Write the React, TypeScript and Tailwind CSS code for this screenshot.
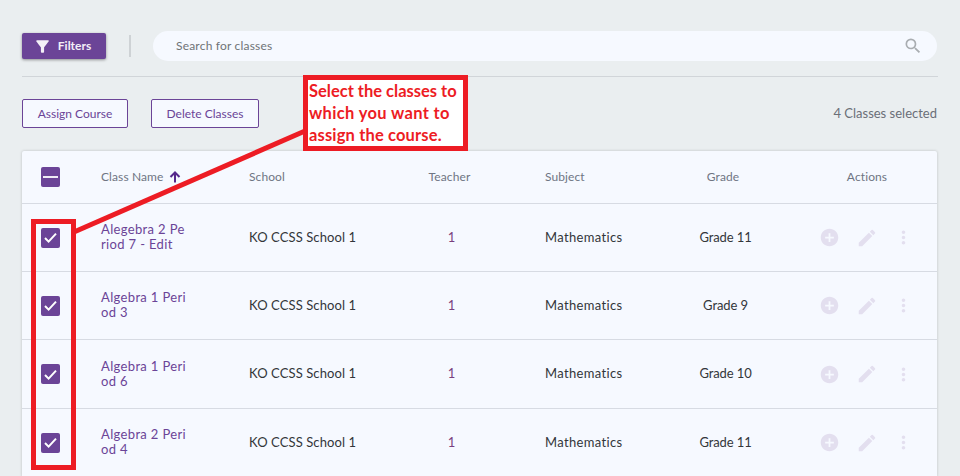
import { MdAddCircle, MdEdit, MdMoreVert, MdSearch, MdFilterAlt } from "react-icons/md";

const font = { fontFamily: '"Lato", "Noto Sans", sans-serif' };

const rows = [
  { a: "Alegebra 2 Pe", b: "riod 7 - Edit", grade: "Grade 11", h: "h-[68px]" },
  { a: "Algebra 1 Peri", b: "od 3", grade: "Grade 9", h: "h-[68px]" },
  { a: "Algebra 1 Peri", b: "od 6", grade: "Grade 10", h: "h-[69px]" },
  { a: "Algebra 2 Peri", b: "od 4", grade: "Grade 11", h: "h-[68px]" },
];

function Box({ minus }: { minus?: boolean }) {
  return (
    <div className="w-[19px] h-[20px] rounded-[2px] bg-[#6b4497] flex items-center justify-center">
      {minus ? (
        <div className="w-[15px] h-[2px] bg-[#f0ecf5]" />
      ) : (
        <svg width="15" height="13" viewBox="0 0 15 13" fill="none">
          <path d="M2 7l3.6 3.6L13 2.6" stroke="#fff" strokeWidth="2" />
        </svg>
      )}
    </div>
  );
}

export default function App() {
  return (
    <div className="relative h-[476px] w-[960px] overflow-hidden bg-[#eaeef0]" style={font}>
      <div className="pl-[22px] pr-[22px]">
        <div className="flex items-center h-[77px] pt-[16px] border-b border-[#d1d5d9]">
          <button className="w-[84px] h-[26px] rounded-[2px] bg-[#6b4497] text-[#f3f0f7] text-[12px] font-bold flex items-center justify-center gap-[6px] shadow-[0_1px_3px_rgba(0,0,0,0.4)]">
            <MdFilterAlt size={19} className="-ml-1" />
            <span>Filters</span>
          </button>
          <div className="ml-[23px] w-[2px] h-[22px] bg-[#ced2d5]" />
          <div className="ml-[22px] w-[784px] h-[30px] rounded-full bg-[#f6f9ff] flex items-center justify-between pl-[23px] pr-[14px]">
            <span className="text-[12px] tracking-[0.2px] text-[#6f7376]">Search for classes</span>
            <MdSearch size={20} className="text-[#a9adb1]" />
          </div>
        </div>
        <div className="flex items-center h-[74px] pb-px">
          <button className="w-[106px] h-[29px] rounded-[2px] border border-[#6b4497] bg-[#f6f9ff] text-[#6b4497] text-[12px]">Assign Course</button>
          <button className="ml-[23px] w-[108px] h-[29px] rounded-[2px] border border-[#6b4497] bg-[#f6f9ff] text-[#6b4497] text-[12px]">Delete Classes</button>
          <span className="ml-auto pr-px text-[13px] text-[#6a6f78]">4 Classes selected</span>
        </div>
        <div className="w-[915px] bg-[#f6f9ff] shadow-[0_0_3px_rgba(0,0,0,0.2)] rounded-t-[2px]">
          <div className="grid grid-cols-[79px_148px_150px_101px_165px_116px_156px] items-center h-[53px] border-b border-[#d7dbe3] text-[12px] tracking-[0.1px] text-[#6f7583]">
            <div className="pl-[19px]"><Box minus /></div>
            <div className="flex items-center gap-[6px]">
              Class Name
              <svg width="12" height="12" viewBox="0 0 12 12" fill="none" className="text-[#56288c]">
                <path d="M6 11.5V1.5M1.5 6L6 1.5 10.500 6" stroke="currentColor" strokeWidth="2" />
              </svg>
            </div>
            <div>School</div>
            <div className="text-center">Teacher</div>
            <div className="pl-[45px]">Subject</div>
            <div className="text-center">Grade</div>
            <div className="text-center pl-[16px]">Actions</div>
          </div>
          {rows.map((r, i) => (
            <div key={i} className={`grid grid-cols-[79px_148px_150px_101px_165px_116px_156px] items-center border-b border-[#d7dbe3] text-[13px] text-[#33363a] ${r.h}`}>
              <div className="pl-[19px]"><Box /></div>
              <div className="text-[#6b4497] leading-[15px] tracking-[0.35px] -mt-px">
                <div>{r.a}</div>
                <div>{r.b}</div>
              </div>
              <div className="tracking-[0.1px]">KO CCSS School 1</div>
              <div className="text-center pl-[4px] text-[#7a3f7e]">1</div>
              <div className="pl-[45px] tracking-[0.35px]">Mathematics</div>
              <div className="text-center pl-[5px] tracking-[-0.1px]">{r.grade}</div>
              <div className="flex items-center pl-[38px] text-[#e3dfef]">
                <MdAddCircle size={21} />
                <MdEdit size={22} className="ml-[16px]" />
                <MdMoreVert size={21} className="ml-[15px]" />
              </div>
            </div>
          ))}
        </div>
      </div>

      <svg className="absolute left-0 top-0 pointer-events-none" width="960" height="476">
        <line x1="74" y1="232" x2="305" y2="131" stroke="#ed1c24" strokeWidth="5" />
      </svg>
      <div className="absolute left-[31px] top-[219px] w-[45px] h-[251px] border-[5px] border-[#ed1c24]" />
      <div className="absolute left-[303px] top-[75px] w-[165px] h-[76px] border-[5px] border-[#ed1c24] bg-white pl-[1px] text-[16.5px] leading-[22px] font-bold text-[#ed1c24] whitespace-nowrap">
        <div>Select the classes to</div>
        <div className="tracking-[0.35px]">which you want to</div>
        <div className="tracking-[0.15px]">assign the course.</div>
      </div>
    </div>
  );
}
